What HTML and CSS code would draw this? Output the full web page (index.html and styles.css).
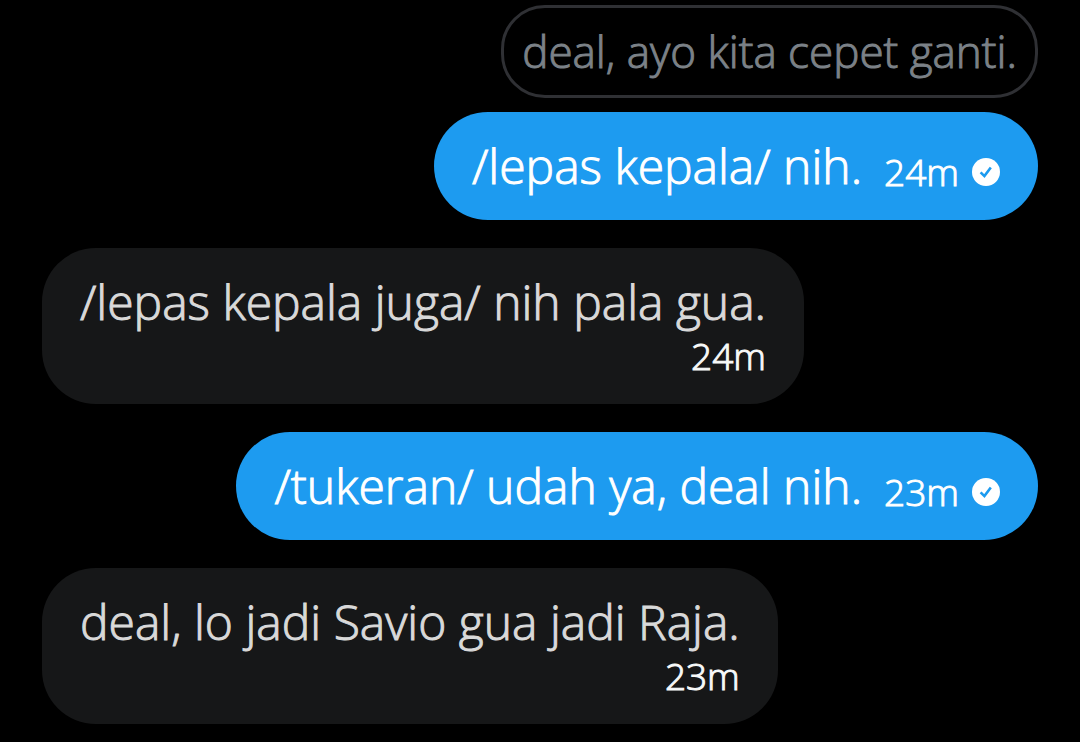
FILE: index.html
```html
<!DOCTYPE html>
<html lang="id">
<head>
<meta charset="utf-8">
<meta name="viewport" content="width=device-width, initial-scale=1">
<title>Messages</title>
<link rel="stylesheet" href="styles.css">
</head>
<body>
<main class="thread">
  <div class="message sent">
    <blockquote class="quote">deal, ayo kita cepet ganti.</blockquote>
    <div class="bubble">
      <p class="text">/lepas kepala/ nih.</p>
      <span class="meta"><time>24m</time>
        <svg class="check" viewBox="0 0 28 28" role="img" aria-label="Sent"><circle cx="14" cy="14" r="14" fill="#fff"/><path d="M8.6 14.4l3.8 3.7 6.4-8.6" fill="none" stroke="#1d9bf0" stroke-width="2.6"/></svg>
      </span>
    </div>
  </div>
  <div class="message received">
    <div class="bubble">
      <p class="text">/lepas kepala juga/ nih pala gua.</p>
      <span class="meta"><time>24m</time></span>
    </div>
  </div>
  <div class="message sent">
    <div class="bubble">
      <p class="text">/tukeran/ udah ya, deal nih.</p>
      <span class="meta"><time>23m</time>
        <svg class="check" viewBox="0 0 28 28" role="img" aria-label="Sent"><circle cx="14" cy="14" r="14" fill="#fff"/><path d="M8.6 14.4l3.8 3.7 6.4-8.6" fill="none" stroke="#1d9bf0" stroke-width="2.6"/></svg>
      </span>
    </div>
  </div>
  <div class="message received">
    <div class="bubble">
      <p class="text">deal, lo jadi Savio gua jadi Raja.</p>
      <span class="meta"><time>23m</time></span>
    </div>
  </div>
</main>
</body>
</html>
```
FILE: styles.css
```css
* { box-sizing: border-box; }
body { margin: 0; background: #000; font-family: "Open Sans", "Noto Sans", sans-serif; font-weight: 300; -webkit-text-stroke: 1px currentColor; }
.thread { display: flex; flex-direction: column; gap: 28px; padding: 5px 42px 18px; }
.message { display: flex; flex-direction: column; align-items: flex-start; gap: 14px; }
.sent { align-items: flex-end; }
.quote { margin: 0; padding: 14px 18px; border: 3px solid #2f3034; border-radius: 44px; color: #7b8187; font-size: 44px; line-height: 59px; white-space: nowrap; }
.bubble { display: flex; padding: 24px 38px; border-radius: 54px; white-space: nowrap; }
.sent .bubble { align-items: flex-end; gap: 22px; background: #1d9bf0; color: #fff; }
.received .bubble { flex-direction: column; align-items: flex-end; background: #161718; color: #d9d9d9; }
.text { margin: 0; font-size: 48px; line-height: 60px; }
.meta { display: flex; align-items: center; gap: 13px; font-size: 37px; line-height: 48px; }
.received .meta { color: #f7f9f9; }
.check { width: 28px; height: 28px; }
```
